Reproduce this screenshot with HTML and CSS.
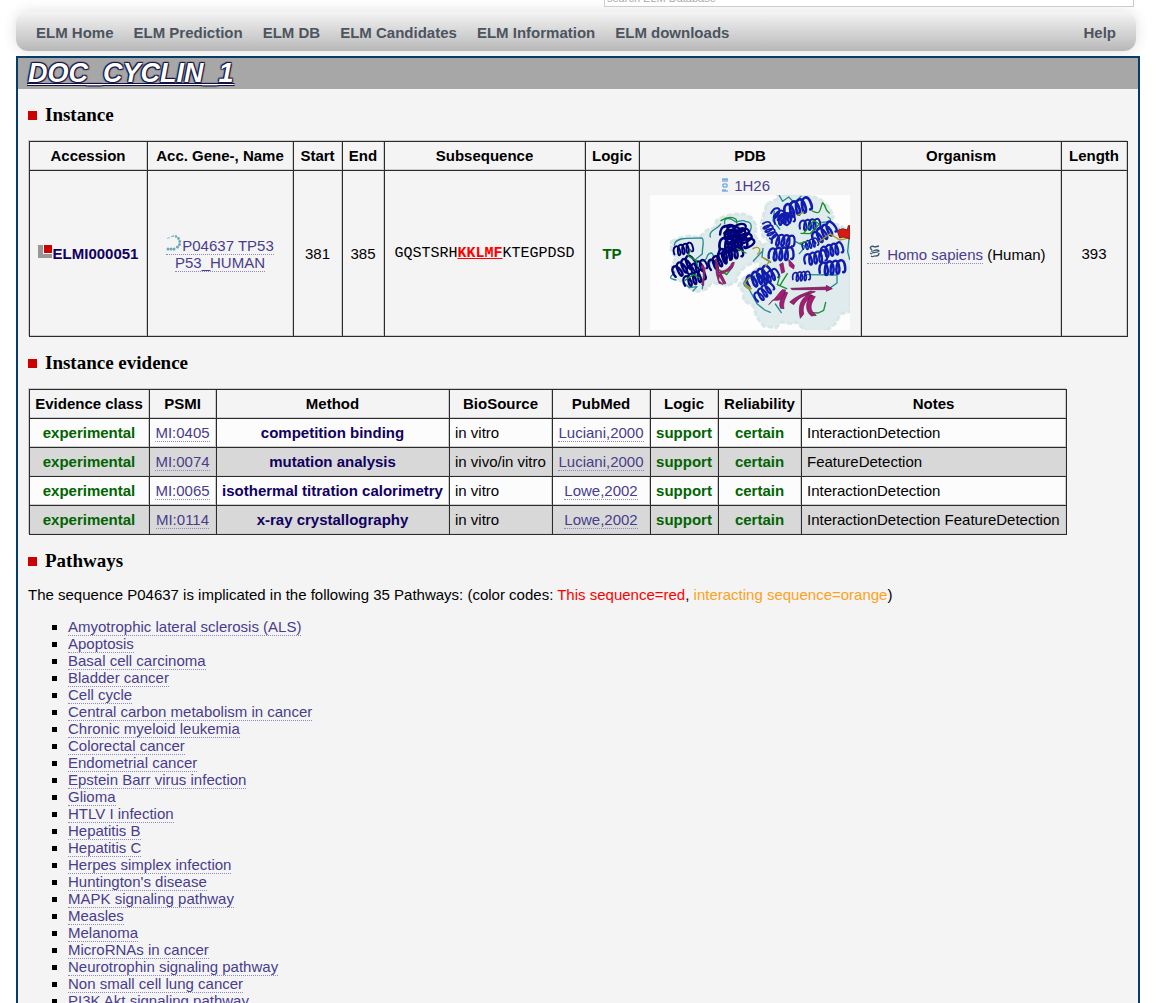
FILE: index.html
```html
<!DOCTYPE html>
<html lang="en">
<head>
<meta charset="utf-8">
<title>ELM - DOC_CYCLIN_1</title>
<link rel="stylesheet" href="styles.css">
</head>
<body>
<header class="search">
  <input class="search-box" type="search" aria-label="search ELM Database" placeholder="search ELM Database">
</header>
<nav class="menu">
  <a href="#">ELM Home</a>
  <a href="#">ELM Prediction</a>
  <a href="#">ELM DB</a>
  <a href="#">ELM Candidates</a>
  <a href="#">ELM Information</a>
  <a href="#">ELM downloads</a>
  <a class="menu-help" href="#">Help</a>
</nav>
<main class="page">
  <h1 class="title"><a href="#">DOC_CYCLIN_1</a></h1>
  <div class="content">
    <h2 class="heading">Instance</h2>
    <table class="grid instance">
      <colgroup>
        <col class="w-accession"><col class="w-gene"><col class="w-start"><col class="w-end"><col class="w-subsequence"><col class="w-tp"><col class="w-pdb"><col><col class="w-length">
      </colgroup>
      <thead>
        <tr><th>Accession</th><th>Acc. Gene-, Name</th><th>Start</th><th>End</th><th>Subsequence</th><th>Logic</th><th>PDB</th><th>Organism</th><th>Length</th></tr>
      </thead>
      <tbody>
        <tr>
          <td><a class="strong-link" href="#"><svg class="icon-elm" viewBox="0 0 14 14" aria-hidden="true"><path d="M0 0h5v9h9v4H0z" fill="#979797"/><path d="M6 0h8v8H6z" fill="#c00"/></svg>ELMI000051</a></td>
          <td><a class="link" href="#"><svg class="icon-uniprot" viewBox="0 0 16 16" aria-hidden="true"><g fill="#6fabb8"><path d="M1 3l3-1v1L1 4zM5 1l3-1v2H5z" opacity=".7"/><circle cx="10" cy="1.500" r="1.300"/><circle cx="12.500" cy="3.500" r="1.400"/><circle cx="13.700" cy="6.500" r="1.400"/><circle cx="13.500" cy="9.500" r="1.500"/><circle cx="11.500" cy="12" r="1.600"/><circle cx="8" cy="14" r="1.600"/><circle cx="5" cy="14" r="1.600"/><circle cx="2" cy="14" r="1.500"/></g></svg>P04637 TP53<br>P53_HUMAN</a></td>
          <td>381</td>
          <td>385</td>
          <td class="sequence">GQSTSRH<b class="motif">KKLMF</b>KTEGPDSD</td>
          <td class="good">TP</td>
          <td class="structure">
            <a class="plain-link" href="#"><svg class="icon-pdb" viewBox="0 0 6 14" aria-hidden="true"><path d="M1 1v3M3 1v3M5 1v3M0 1h6M1 6h4v3H1zM1 11v2M3 11v2M0 13h6" fill="none" stroke="#4a90d9"/></svg> 1H26</a>
            <svg class="protein" viewBox="0 0 600 405" role="img" aria-label="Structure 1H26">
              <defs>
                <path id="coil" d="M0 10c-3-26 20-34 20-6 0 18-11 16-7 0 3-22 22-28 21 0-1 18-11 16-7 0 3-22 22-28 21 0-1 18-11 16-7 0 3-22 22-28 21 0 0 8-3 12-6 10"/>
              </defs>
              <rect width="600" height="405" fill="#fdfdfd"/>
              <g fill="#dfebec" stroke="#d9e6e8" stroke-width="9" stroke-linejoin="round" stroke-dasharray="17 5">
                <path d="M64 139l27-10 28-6 28 5 25-23 22-7 6-22 21-11 26-7 34-1 22 10 15 24-2 34 18 23 3 30-11 19-39 15-23 25-6 23-27 12-24-6-23-3-12 17-28 10-29-12-18-15-25-22-6-28 12-25-14-20z"/>
                <path d="M350 28l31-15 1-13h94l33 12 29 26 12 27-14 22 28 2 36 21v239l-29 8-15 29-29 22-34 4-28-7-27-25-9 6-36-5-14 17-38-5-22-29-8-31-30-17-1-25-14-20 16-22 22-14 29-25-6-31 6-23 24-18-19-14-5-35z"/>
              </g>
              <g class="loops" stroke="#258b93" stroke-width="4">
                <path d="M73 151c1-26 48-21 83-22 9 6 0 27 1 48-17 15-35 20 0 22 20-3 8-25 28-25 17 15-16 27-5 39M74 231c-19 22-15 18 4 24M101 263l17 15 23-3-12 13M181 126c-7-20 27-27 31-39M224 86c-4-22 20-15 29-8 8 9 23-9 34 2 21-1 19 22 10 34M160 252l-3 29"/>
                <path d="M388 2l10 17 18-13 17 17 20-19M373 49l-4 28 20 25M437 140l29 15-18 21M515 82c32 0 30-10 19-16M462 155l18-15M339 160l-3 26 26 16M567 102l31 18-5 50 6 23M315 243c-44 14-39 28-18 39l24 44 23 19 17 7M473 239l88 1v24l-28 20M376 327l18 26M310 198l26-28"/>
              </g>
              <g class="coils" stroke="#000078">
                <use href="#coil" transform="translate(71 169) rotate(-14) scale(.95)"/>
                <use href="#coil" transform="translate(70 236) rotate(-36) scale(1.200)"/>
                <use href="#coil" transform="translate(101 262) rotate(-22) scale(1.100)"/>
                <use href="#coil" transform="translate(112 230) rotate(-24) scale(1)"/>
                <use href="#coil" transform="translate(212 107) rotate(9) scale(1.200)"/>
                <use href="#coil" transform="translate(208 150) rotate(-8) scale(1.350)"/>
                <use href="#coil" transform="translate(205 181) rotate(-12) scale(1.200)"/>
                <use href="#coil" transform="translate(233 91) rotate(64) scale(1.200)"/>
                <use href="#coil" transform="translate(266 88) rotate(62) scale(1.200)"/>
                <use href="#coil" transform="translate(177 215) rotate(-32) scale(1.150)"/>
              </g>
              <g class="coils" stroke="#101cad">
                <use href="#coil" transform="translate(403 50) rotate(-19) scale(1.350)"/>
                <use href="#coil" transform="translate(369 46) rotate(34) scale(1)"/>
                <use href="#coil" transform="translate(346 82) rotate(60) scale(.85)"/>
                <use href="#coil" transform="translate(373 77) rotate(-12) scale(1)"/>
                <use href="#coil" transform="translate(366 133) rotate(5) scale(1.100)"/>
                <use href="#coil" transform="translate(449 91) rotate(-5) scale(1)"/>
                <use href="#coil" transform="translate(489 134) rotate(-34) scale(1.250)"/>
                <use href="#coil" transform="translate(457 155) rotate(-20) scale(.8)"/>
                <use href="#coil" transform="translate(463 195) rotate(-13) scale(1.100)"/>
                <use href="#coil" transform="translate(512 173) rotate(-15) scale(1.100)"/>
                <use href="#coil" transform="translate(508 221) rotate(-6) scale(1.250)"/>
                <use href="#coil" transform="translate(356 177) rotate(-2) scale(1.200)"/>
                <use href="#coil" transform="translate(428 245) rotate(-4) scale(.85)"/>
                <use href="#coil" transform="translate(292 265) rotate(-30) scale(1.300)"/>
                <use href="#coil" transform="translate(328 259) rotate(-26) scale(1)"/>
                <use href="#coil" transform="translate(317 312) rotate(-42) scale(1.050)"/>
              </g>
              <g class="loops" stroke="#15912b" stroke-width="4">
                <path d="M213 77c26-17 50-9 47 7M122 164l-8 18 24 15 5 16M105 256l25-17 19 10M205 223l25 16 16-22M261 161l27 13M487 48c29 16 23-13 31-25 14 13 2 18 20 31M463 113l28-36 17 10-28 29-27-1M389 244l-7 25 28 12M412 236l-22 35M470 139l-21 6M527 322l-6 24-16 8-19-1"/>
              </g>
              <g class="loops" stroke="#a69d28" stroke-width="4">
                <path d="M309 161c20-12 25 7 14 16M335 186l25 12-13 15M443 61l18-10M300 247c-29 18-6 40 4 34l-19-13M510 138l30-22 29 19 20-4"/>
              </g>
              <g fill="#a71b75" stroke="#5b1b4b" stroke-width="2">
                <path d="M199 192l10 44-3 20 13 12-12-3-8-28-4-43zM246 203c-12 24-25 23-36 27l-5 7 16 30 7-2-14-28c24-10 35-12 39-35zM158 208c15 20 2 43 3 64l-6-3c5-17 8-38-1-57z"/>
                <path d="M399 203l5 28-9 4-6-27zM416 193l17 18-2 11-13-9z"/>
                <path d="M422 280l107-4v-5l18 10-18 8v-5H426zM407 285c-12 35-21 32-39 30l-12 14c26-24 30-36 41-45zM406 291c-13 20-22 32-14 49l10 1c-4-19 5-31 11-48zM496 290c-24 10-47 12-65 39l-12-8c22-20 41-24 63-33zM474 297c-26 19-30 41-23 73l10-13c-6-26 8-41 27-56zM482 301c-17 22-16 48 2 62l15-2c-23-17-18-34-3-56z"/>
              </g>
              <path d="M562 108l15-7 15 4 3-13h5v40l-20-6-11 3z" fill="#d51b12" stroke="#901316" stroke-width="3"/>
            </svg>
          </td>
          <td class="left"><a class="link" href="#"><svg class="icon-species" viewBox="0 0 16 16" aria-hidden="true"><path d="M3 4c1-2 3-2 5-1l4-1M4 7c3 1 5-3 8 0-1 2-4 1-7 2M4 12c2 2 3-1 5 0 3 0 3-2 3-3M3 4l2 2M3 9l2 1" fill="none" stroke="#355675" stroke-width="1.300"/></svg> Homo sapiens</a> (Human)</td>
          <td>393</td>
        </tr>
      </tbody>
    </table>

    <h2 class="heading">Instance evidence</h2>
    <table class="grid evidence">
      <colgroup>
        <col class="w-class"><col class="w-psmi"><col class="w-method"><col class="w-source"><col class="w-pubmed"><col class="w-support"><col class="w-reliability"><col class="w-notes">
      </colgroup>
      <thead>
        <tr><th>Evidence class</th><th>PSMI</th><th>Method</th><th>BioSource</th><th>PubMed</th><th>Logic</th><th>Reliability</th><th>Notes</th></tr>
      </thead>
      <tbody>
        <tr><td class="good">experimental</td><td><a class="link" href="#">MI:0405</a></td><td class="method">competition binding</td><td class="left">in vitro</td><td><a class="link" href="#">Luciani,2000</a></td><td class="good">support</td><td class="good">certain</td><td class="left">InteractionDetection</td></tr>
        <tr><td class="good">experimental</td><td><a class="link" href="#">MI:0074</a></td><td class="method">mutation analysis</td><td class="left">in vivo/in vitro</td><td><a class="link" href="#">Luciani,2000</a></td><td class="good">support</td><td class="good">certain</td><td class="left">FeatureDetection</td></tr>
        <tr><td class="good">experimental</td><td><a class="link" href="#">MI:0065</a></td><td class="method">isothermal titration calorimetry</td><td class="left">in vitro</td><td><a class="link" href="#">Lowe,2002</a></td><td class="good">support</td><td class="good">certain</td><td class="left">InteractionDetection</td></tr>
        <tr><td class="good">experimental</td><td><a class="link" href="#">MI:0114</a></td><td class="method">x-ray crystallography</td><td class="left">in vitro</td><td><a class="link" href="#">Lowe,2002</a></td><td class="good">support</td><td class="good">certain</td><td class="left">InteractionDetection FeatureDetection</td></tr>
      </tbody>
    </table>

    <h2 class="heading">Pathways</h2>
    <p class="intro">The sequence P04637 is implicated in the following 35 Pathways: (color codes: <span class="own">This sequence=red</span>, <span class="partner">interacting sequence=orange</span>)</p>
    <ul class="pathways">
      <li><a class="link" href="#">Amyotrophic lateral sclerosis (ALS)</a></li>
      <li><a class="link" href="#">Apoptosis</a></li>
      <li><a class="link" href="#">Basal cell carcinoma</a></li>
      <li><a class="link" href="#">Bladder cancer</a></li>
      <li><a class="link" href="#">Cell cycle</a></li>
      <li><a class="link" href="#">Central carbon metabolism in cancer</a></li>
      <li><a class="link" href="#">Chronic myeloid leukemia</a></li>
      <li><a class="link" href="#">Colorectal cancer</a></li>
      <li><a class="link" href="#">Endometrial cancer</a></li>
      <li><a class="link" href="#">Epstein Barr virus infection</a></li>
      <li><a class="link" href="#">Glioma</a></li>
      <li><a class="link" href="#">HTLV I infection</a></li>
      <li><a class="link" href="#">Hepatitis B</a></li>
      <li><a class="link" href="#">Hepatitis C</a></li>
      <li><a class="link" href="#">Herpes simplex infection</a></li>
      <li><a class="link" href="#">Huntington's disease</a></li>
      <li><a class="link" href="#">MAPK signaling pathway</a></li>
      <li><a class="link" href="#">Measles</a></li>
      <li><a class="link" href="#">Melanoma</a></li>
      <li><a class="link" href="#">MicroRNAs in cancer</a></li>
      <li><a class="link" href="#">Neurotrophin signaling pathway</a></li>
      <li><a class="link" href="#">Non small cell lung cancer</a></li>
      <li><a class="link" href="#">PI3K Akt signaling pathway</a></li>
    </ul>
  </div>
</main>
</body>
</html>
```
FILE: styles.css
```css
* { box-sizing: border-box; }

body {
  margin: 0;
  height: 100vh;
  overflow: hidden;
  background: #fff;
  color: #000;
  font: 15px/17px "Liberation Sans", Arial, sans-serif;
}

a { text-decoration: none; }

/* Search strip */
.search {
  display: flex;
  justify-content: flex-end;
  align-items: flex-end;
  height: 7px;
  margin: 0 40px 5px 16px;
  overflow: hidden;
}

.search-box {
  flex: none;
  width: 530px;
  height: 18px;
  padding: 0 2px;
  border: 1px solid #ccc;
  background: #fff;
  font: 11px/16px "Liberation Sans", Arial, sans-serif;
  appearance: none;
}

.search-box::placeholder { color: #aaa; opacity: 1; }

/* Menu */
.menu {
  display: flex;
  align-items: center;
  gap: 20px;
  height: 39px;
  margin: 0 38px 5px 16px;
  padding: 2px 20px 0;
  border-radius: 12px;
  background: linear-gradient(#f4f4f4, #b8b8b8);
  box-shadow: 0 0 14px #ddd;
}

.menu a { color: #4c5460; font-weight: bold; }

.menu .menu-help { margin-left: auto; }

/* Page frame */
.page {
  margin: 0 34px 0 16px;
  border: 2px solid #063c68;
  background: #f4f4f4;
  position: relative;
}

.title {
  margin: 0;
  height: 31px;
  padding-left: 10px;
  background: #a7a7a7;
  font: italic bold 27px/30px "Liberation Sans", Arial, sans-serif;
}

.title a {
  color: #fff;
  text-decoration: underline;
  text-decoration-thickness: 1px;
  text-underline-offset: 2px;
  text-decoration-skip-ink: none;
  text-shadow: 1px 1px 1px #114, -1px -1px 1px #114, 1px -1px 1px #114, -1px 1px 1px #114;
}

.content { padding: 16px 10px; }

.heading {
  display: flex;
  align-items: center;
  gap: 8px;
  margin: 0 0 16px;
  font: bold 19px/20px "Liberation Serif", serif;
}

.heading::before {
  content: "";
  width: 9px;
  height: 9px;
  background: #c00;
}

/* Tables */
.grid {
  margin: 0 0 16px 1px;
  border-collapse: collapse;
  table-layout: fixed;
  box-shadow: -1px -1px #ccc;
}

.grid th,
.grid td {
  padding: 5px 6px 6px 5px;
  border: 1px solid #2b2b2b;
  box-shadow: inset -1px -1px #ccc;
  text-align: center;
  white-space: nowrap;
}

.instance { width: calc(100% - 1px); }
.evidence { width: 1038px; }

.grid .left { text-align: left; }

.evidence tbody tr { background: #fcfcfc; }
.evidence tbody tr:nth-child(even) { background: #d8d8d8; }

.w-accession { width: 118px; }
.w-gene { width: 146px; }
.w-start { width: 49px; }
.w-end { width: 42px; }
.w-subsequence { width: 201px; }
.w-tp { width: 54px; }
.w-pdb { width: 222px; }
.w-length { width: 66px; }

.w-class { width: 120px; }
.w-psmi { width: 67px; }
.w-method { width: 233px; }
.w-source { width: 103px; }
.w-pubmed { width: 98px; }
.w-support { width: 68px; }
.w-reliability { width: 83px; }
.w-notes { width: 265px; }

.link,
.plain-link { color: #483d8b; }
.link { border-bottom: 1px dotted #8f88c4; }
.plain-link { padding-right: 8px; }
.strong-link { color: #100060; font-weight: bold; }
.method { color: #100060; font-weight: bold; }
.good { color: #006400; font-weight: bold; }

.grid .sequence { font: 15px/17px "Liberation Mono", "Courier New", monospace; }
.motif { color: #f00; text-decoration: underline; }

.icon-elm { width: 14px; height: 14px; margin-right: 1px; }
.icon-uniprot { width: 16px; height: 16px; }
.icon-pdb { width: 6px; height: 14px; vertical-align: -1px; margin-right: 2px; }
.icon-species { width: 16px; height: 16px; }

.structure { line-height: 19px; }

.protein {
  display: block;
  width: 200px;
  height: 135px;
  margin: 0 auto;
}

.loops { fill: none; stroke-linecap: round; stroke-linejoin: round; }
.coils { fill: none; stroke-width: 6; stroke-linecap: round; }

/* Pathways */
.intro { margin: 0 0 15px; line-height: 16px; }

.own { color: #f00; }
.partner { color: #ffa11a; }

.pathways {
  margin: 0;
  padding-left: 40px;
  list-style: square;
}
```
